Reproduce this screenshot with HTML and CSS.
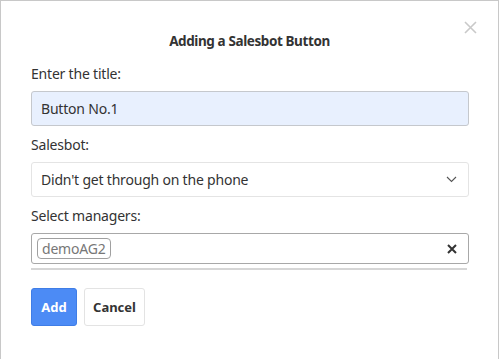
FILE: index.html
```html
<!DOCTYPE html>
<html lang="en">
<head>
    <meta charset="UTF-8">
    <title>Adding a Salesbot Button</title>
    <link rel="stylesheet" href="styles.css">
</head>
<body>
    <div class="modal">
        <span class="close">
            <svg width="13" height="13" viewBox="0 0 13 13"><path d="M1 1L12 12M12 1L1 12" stroke="#c9c9c9" stroke-width="1.6" fill="none"/></svg>
        </span>
        <h2 class="title">Adding a Salesbot Button</h2>
        <div class="form">
            <p class="label">Enter the title:</p>
            <div class="field field-title">Button No.1</div>
            <p class="label">Salesbot:</p>
            <div class="field field-select">
                <span>Didn't get through on the phone</span>
                <svg width="11" height="7" viewBox="0 0 11 7"><path d="M1 1L5.5 5.5L10 1" stroke="#555" stroke-width="1.1" fill="none"/></svg>
            </div>
            <p class="label">Select managers:</p>
            <div class="field field-managers">
                <span class="tag">demoAG2</span>
                <svg width="10" height="10" viewBox="0 0 10 10"><path d="M1 1L9 9M9 1L1 9" stroke="#333" stroke-width="2" fill="none"/></svg>
            </div>
            <div class="underline"></div>
            <div class="buttons">
                <button class="btn btn-add">Add</button>
                <button class="btn btn-cancel">Cancel</button>
            </div>
        </div>
    </div>
</body>
</html>
```

FILE: styles.css
```css
*{margin:0; padding:0; box-sizing:border-box;}
body{
    font-family: "Noto Sans", "Open Sans", sans-serif;
    color: #333;
    background: #fff;
    overflow: hidden;
}
.modal{
    position: relative;
    width: 499px;
    height: 359px;
    border: 1px solid #c8c8c8;
    border-bottom: none;
    padding: 30px 30px 0 30px;
}
.close{
    position: absolute;
    top: 20px;
    right: 21px;
    width: 13px;
    height: 13px;
    display: block;
}
.close svg{display:block;}
.title{
    height: 20px;
    line-height: 20px;
    font-size: 13.5px;
    letter-spacing: -0.4px;
    font-weight: bold;
    text-align: center;
}
.form{
    width: 438px;
    padding-top: 13px;
}
.label{
    height: 20px;
    line-height: 20px;
    font-size: 14px;
    letter-spacing: -0.2px;
    margin-bottom: 7px;
}
.field{
    display: flex;
    align-items: center;
    height: 35px;
    border: 1px solid #e4e4e4;
    border-radius: 3px;
    padding: 0 9px;
    font-size: 14px;
    letter-spacing: -0.2px;
    margin-bottom: 9px;
}
.field-title{
    background: #e8f0fe;
    border-color: #c5c8cd;
}
.field-select{
    justify-content: space-between;
    padding-right: 11px;
}
.field-managers{
    height: 31px;
    border-color: #a8a8a8;
    justify-content: space-between;
    padding: 0 11px 0 5px;
    margin-bottom: 4px;
}
.tag{
    height: 21px;
    line-height: 19px;
    border: 1px solid #a0a0a0;
    border-radius: 4px;
    padding: 0 4px;
    color: #777;
    font-size: 14px;
}
.underline{
    width: 436px;
    height: 2px;
    background: #d6d6d6;
}
.buttons{
    display: flex;
    gap: 7px;
    margin-top: 18px;
}
.btn{
    height: 38px;
    border-radius: 3px;
    font-family: inherit;
    font-size: 13px;
    font-weight: bold;
}
.btn-add{
    width: 46px;
    background: #4c8bf5;
    border: 1px solid #3f7de6;
    color: #fff;
}
.btn-cancel{
    width: 61px;
    background: #fff;
    border: 1px solid #e3e3e3;
    color: #333;
}
```
